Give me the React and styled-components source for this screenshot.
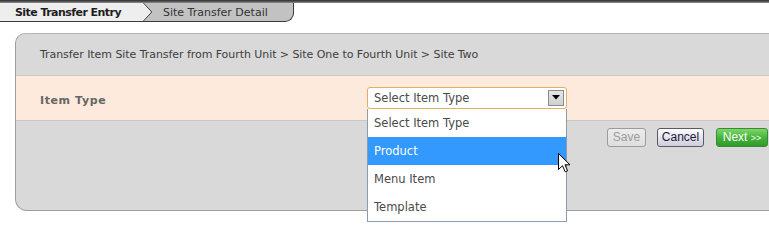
import React from "react";
import styled, { createGlobalStyle, css } from "styled-components";

const GlobalStyle = createGlobalStyle`
  html, body { margin: 0; padding: 0; background: #ffffff; overflow: hidden; }
  body { width: 769px; height: 224px; font-family: "DejaVu Sans", Verdana, sans-serif; }
`;

const Page = styled.div`
  width: 769px;
  height: 224px;
`;

const TabStrip = styled.div`
  display: flex;
  align-items: stretch;
  height: 19px;
  padding-top: 3px;
  background: linear-gradient(#333333, #5a5a5a 60%, #9a9a9a) top left / 100% 3px no-repeat;
`;

const Tab = styled.div`
  display: flex;
  align-items: center;
  box-sizing: border-box;
  height: 19px;
  padding-top: 1px;
  font-size: 11px;
  border-bottom: 1px solid #3a3a3a;
  ${(p) =>
    p.$active
      ? css`
          width: 143px;
          padding-left: 15px;
          background: #eeeeee;
          color: #1e1e1e;
          font-weight: bold;
          letter-spacing: -0.55px;
        `
      : css`
          width: 141px;
          padding-left: 10px;
          background: #c2c2c2;
          color: #333333;
          border-right: 1px solid #3a3a3a;
          border-bottom-right-radius: 9px;
        `}
`;

const Chevron = () => (
  <svg width="10" height="19" viewBox="0 0 10 19" style={{ display: "block", flex: "none" }}>
    <rect x="0" y="0" width="10" height="19" fill="#c2c2c2" />
    <polygon points="0,0 1,0 9,9 1,18 0,18" fill="#eeeeee" />
    <polyline points="0.5,0 8.8,9 0.5,18" fill="none" stroke="#3a3a3a" strokeWidth="1" />
    <line x1="0" y1="18.5" x2="10" y2="18.5" stroke="#3a3a3a" strokeWidth="1" />
  </svg>
);

const Panel = styled.div`
  margin: 11px 0 0 15px;
  width: 769px;
  box-sizing: border-box;
  background: #d9d9d9;
  border: 1px solid #9e9e9e;
  border-top-color: #b4b4b4;
  border-radius: 10px 0 0 12px;
  position: relative;
`;

const PanelHeader = styled.div`
  height: 41px;
  display: flex;
  align-items: center;
  padding-left: 24px;
  font-size: 11px;
  letter-spacing: -0.06px;
  color: #3e3e3e;
`;

const FieldRow = styled.div`
  display: grid;
  grid-template-columns: 327px 200px;
  align-items: center;
  height: 44px;
  padding-left: 24px;
  background: #fdeadc;
  border-top: 1px solid #c9c9c9;
  border-bottom: 1px solid #c9c9c9;
`;

const FieldLabel = styled.div`
  font-size: 11px;
  font-weight: bold;
  letter-spacing: 0.6px;
  color: #666666;
  padding-top: 4px;
`;

const SelectWrap = styled.div`
  position: relative;
  width: 200px;
  height: 22px;
  margin-top: -1px;
`;

const SelectBox = styled.div`
  box-sizing: border-box;
  height: 22px;
  width: 200px;
  display: flex;
  align-items: center;
  justify-content: space-between;
  padding: 0 2px 0 6px;
  background: #ffffff;
  border: 1px solid #e0b15c;
  border-radius: 3px;
  font-size: 11.5px;
  color: #4a4a4a;
`;

const ArrowButton = styled.span`
  box-sizing: border-box;
  width: 16px;
  height: 16px;
  display: flex;
  align-items: center;
  justify-content: center;
  background: linear-gradient(#e6e6e6, #cfcfcf);
  border: 1px solid #8a8a8a;
`;

const OptionList = styled.ul`
  position: absolute;
  top: 22px;
  left: 0;
  width: 200px;
  box-sizing: border-box;
  margin: 0;
  padding: 0;
  list-style: none;
  background: #ffffff;
  border: 1px solid #8c9cae;
  border-top: none;
  z-index: 5;
`;

const Option = styled.li`
  height: 28px;
  display: flex;
  align-items: center;
  padding-left: 6px;
  font-size: 11.5px;
  color: ${(p) => (p.$selected ? "#ffffff" : "#4a4a4a")};
  background: ${(p) => (p.$selected ? "#3399ff" : "transparent")};
`;

const Cursor = styled.svg`
  position: absolute;
  left: 191px;
  top: 66px;
  z-index: 6;
`;

const ButtonRow = styled.div`
  display: flex;
  justify-content: flex-end;
  align-items: flex-start;
  gap: 11px;
  height: 89px;
  box-sizing: border-box;
  padding: 7px 15px 0 0;
`;

const variants = {
  disabled: css`
    width: 39px;
    background: linear-gradient(#ececec, #dedede);
    border-color: #9c9c9c;
    color: #9c9c9c;
  `,
  plain: css`
    width: 47px;
    background: linear-gradient(#ffffff, #e4e4ee 50%, #cfcfdc);
    border-color: #5a5a66;
    color: #1a1a3a;
  `,
  primary: css`
    width: 52px;
    background: linear-gradient(#7cd86a, #47b43c 50%, #2f9a2c);
    border-color: #3a8a34;
    color: #ffffff;
    margin-left: 1px;
  `,
};

const Button = styled.button`
  box-sizing: border-box;
  height: 19px;
  padding: 0;
  border: 1px solid;
  border-radius: 3px;
  font-family: "Liberation Sans", Arial, sans-serif;
  font-size: 12px;
  line-height: 17px;
  cursor: pointer;
  ${(p) => variants[p.$variant]}
`;

const Small = styled.span`
  font-size: 9px;
`;

const options = ["Select Item Type", "Product", "Menu Item", "Template"];

export default function App() {
  return (
    <Page>
      <GlobalStyle />
      <TabStrip>
        <Tab $active>Site Transfer Entry</Tab>
        <Chevron />
        <Tab>Site Transfer Detail</Tab>
      </TabStrip>
      <Panel>
        <PanelHeader>
          Transfer Item Site Transfer from Fourth Unit &gt; Site One to Fourth Unit &gt; Site Two
        </PanelHeader>
        <FieldRow>
          <FieldLabel>Item Type</FieldLabel>
          <SelectWrap>
            <SelectBox>
              <span>Select Item Type</span>
              <ArrowButton>
                <svg width="8" height="5" viewBox="0 0 8 5">
                  <polygon points="0,0 8,0 4,4.5" fill="#000" />
                </svg>
              </ArrowButton>
            </SelectBox>
            <OptionList>
              {options.map((o) => (
                <Option key={o} $selected={o === "Product"}>
                  {o}
                </Option>
              ))}
            </OptionList>
            <Cursor width="13" height="20" viewBox="0 0 13 20">
              <path
                d="M0.5,0.5 L0.5,16.5 L4.5,12.7 L7.2,18.8 L9.6,17.8 L7,11.8 L12,11.8 Z"
                fill="#ffffff"
                stroke="#000000"
                strokeWidth="1"
                strokeLinejoin="miter"
              />
            </Cursor>
          </SelectWrap>
        </FieldRow>
        <ButtonRow>
          <Button $variant="disabled" disabled>Save</Button>
          <Button $variant="plain">Cancel</Button>
          <Button $variant="primary">
            Next <Small>&gt;&gt;</Small>
          </Button>
        </ButtonRow>
      </Panel>
    </Page>
  );
}
